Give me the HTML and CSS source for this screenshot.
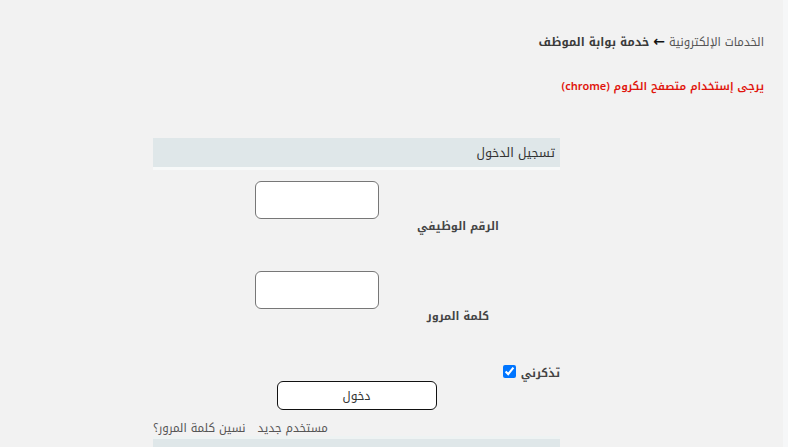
FILE: index.html
```html
<!DOCTYPE html>
<html lang="ar" dir="rtl">
<head>
<meta charset="utf-8">
<title>خدمة بوابة الموظف</title>
<link rel="stylesheet" href="styles.css">
</head>
<body>
<div class="page">
  <div class="breadcrumb">
    <span class="crumb">الخدمات الإلكترونية</span>
    <span class="arrow">&#x2190;</span>
    <span class="crumb current">خدمة بوابة الموظف</span>
  </div>
  <div class="notice">يرجى إستخدام متصفح الكروم (chrome)</div>

  <div class="panel">
    <div class="panel-head">تسجيل الدخول</div>
    <div class="panel-body">
      <div class="field">
        <label class="field-label" for="emp">الرقم الوظيفي</label>
        <input class="field-input" id="emp" type="text">
      </div>
      <div class="field">
        <label class="field-label" for="pwd">كلمة المرور</label>
        <input class="field-input" id="pwd" type="password">
      </div>
      <div class="remember">
        <span class="remember-text">تذكرني</span>
        <input class="remember-box" type="checkbox" checked>
      </div>
      <div class="actions">
        <button class="login-btn" type="button">دخول</button>
      </div>
      <div class="links">
        <a class="link" href="#">مستخدم جديد</a>
        <a class="link" href="#">نسين كلمة المرور؟</a>
      </div>
    </div>
    <div class="panel-foot"></div>
  </div>
</div>
</body>
</html>
```
FILE: styles.css
```css
* { box-sizing: border-box; }
html, body { margin: 0; padding: 0; height: 100%; }
body {
  background: #f2f2f2;
  font-family: "Noto Kufi Arabic", "Noto Sans Arabic", "DejaVu Sans", sans-serif;
  color: #3a3a3a;
  overflow: hidden;
  border-right: 5px solid #f6f7f8;
}
.page {
  padding: 32px 19px 0 0;
}
.breadcrumb {
  font-size: 11.5px;
  line-height: 20px;
  color: #555;
  display: flex;
  align-items: center;
  gap: 4px;
}
.crumb.current { font-weight: bold; color: #3a3a3a; }
.arrow { font-size: 14px; color: #111; font-weight: bold; line-height: 18px; }
.notice {
  margin-top: 26px;
  color: #e0140c;
  font-size: 11px;
  line-height: 18px;
  font-weight: 600;
}
.panel {
  margin-top: 42px;
  margin-right: 204px;
  width: 407px;
}
.panel-head {
  background: #dfe7e9;
  height: 32px;
  line-height: 31px;
  padding-right: 5px;
  font-size: 12.5px;
  color: #333;
  border-bottom: 3px solid #f7f9f9;
}
.panel-body {
  padding-top: 11px;
}
.field {
  display: grid;
  grid-template-columns: 181px 124px;
  height: 90px;
}
.field-label {
  padding-right: 23px;
  padding-top: 35px;
  text-align: center;
  font-size: 11.2px;
  font-weight: bold;
  color: #444;
}
.field-input {
  width: 124px;
  height: 38px;
  border: 1px solid #777;
  border-radius: 6px;
  background: #fff;
  outline: none;
}
.remember {
  display: flex;
  align-items: center;
  gap: 5px;
  height: 20px;
  margin-top: 2px;
}
.remember-text {
  font-size: 11.2px;
  font-weight: bold;
  color: #444;
}
.remember-box {
  margin: 0;
  width: 13px;
  height: 13px;
  position: relative;
  top: -2px;
}
.actions {
  display: flex;
  justify-content: center;
  margin-top: -2px;
}
.login-btn {
  width: 160px;
  height: 29px;
  border: 1px solid #111;
  border-radius: 6px;
  background: #fff;
  font-family: inherit;
  font-size: 12px;
  color: #333;
}
.links {
  display: flex;
  justify-content: flex-end;
  gap: 12px;
  margin-top: 11px;
  font-size: 11.5px;
  line-height: 14px;
}
.link { color: #555; text-decoration: none; }
.panel-foot {
  margin-top: 1px;
  height: 30px;
  background: #dfe7e9;
  border-top: 3px solid #eef3f3;
}
```
